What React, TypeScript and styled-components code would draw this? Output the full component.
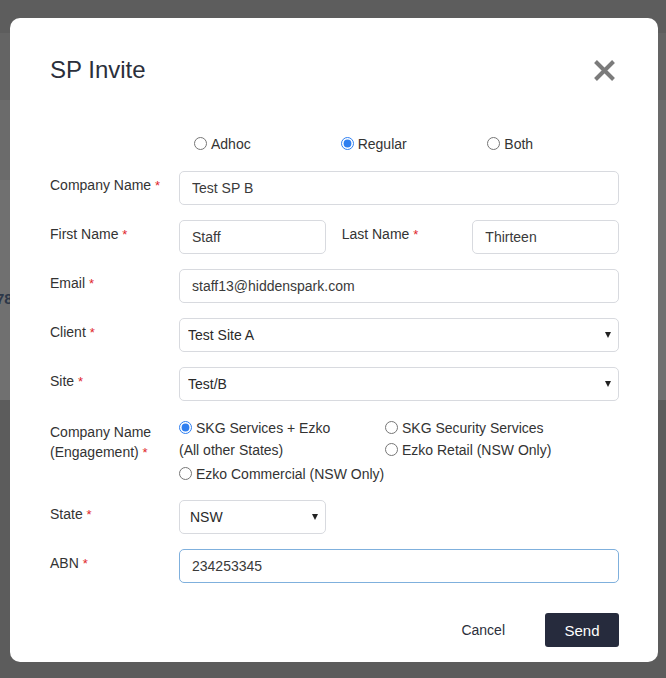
import React from "react";
import styled, { createGlobalStyle } from "styled-components";

const GlobalStyle = createGlobalStyle`
  html, body {
    margin: 0;
    padding: 0;
  }
  body {
    font-family: "Liberation Sans", Arial, sans-serif;
    background: #5e5e5e;
  }
  * {
    box-sizing: border-box;
  }
`;

type Field = {
  label: string;
  value: string;
  select?: boolean;
};

const topFields: Field[] = [
  { label: "Email", value: "staff13@hiddenspark.com" },
  { label: "Client", value: "Test Site A", select: true },
  { label: "Site", value: "Test/B", select: true },
];

function Label({ children }: { children: React.ReactNode }) {
  return (
    <FieldLabel>
      {children} <Req>*</Req>
    </FieldLabel>
  );
}

function Radio({ name, checked, children }: { name: string; checked?: boolean; children: React.ReactNode }) {
  return (
    <RadioLabel>
      <RadioInput type='radio' name={name} defaultChecked={checked} />
      {children}
    </RadioLabel>
  );
}

function App() {
  return (
    <Backdrop>
      <GlobalStyle />
      <GhostText>78</GhostText>
      <Modal>
        <Header>
          <Title>SP Invite</Title>
          <CloseButton aria-label='Close'>
            <svg width='23' height='23' viewBox='0 0 23 23'>
              <path d='M2.5 2.5 L20.5 20.5 M20.5 2.5 L2.5 20.5' stroke='#7b7b7b' strokeWidth='4' />
            </svg>
          </CloseButton>
        </Header>

        <TypeRow>
          <span />
          <ThirdsGrid>
            <TypeCell>
              <Radio name='type'>Adhoc</Radio>
            </TypeCell>
            <TypeCell>
              <Radio name='type' checked>
                Regular
              </Radio>
            </TypeCell>
            <TypeCell>
              <Radio name='type'>Both</Radio>
            </TypeCell>
          </ThirdsGrid>
        </TypeRow>

        <FormRow>
          <Label>Company Name</Label>
          <TextInput defaultValue='Test SP B' />
        </FormRow>

        <FormRow>
          <Label>First Name</Label>
          <ThirdsGrid>
            <TextInput defaultValue='Staff' />
            <InlineLabel>
              <Label>Last Name</Label>
            </InlineLabel>
            <TextInput defaultValue='Thirteen' />
          </ThirdsGrid>
        </FormRow>

        {topFields.map((f) => (
          <FormRow key={f.label}>
            <Label>{f.label}</Label>
            {f.select ? (
              <SelectBox>
                <SelectInput defaultValue={f.value}>
                  <option>{f.value}</option>
                </SelectInput>
              </SelectBox>
            ) : (
              <TextInput defaultValue={f.value} />
            )}
          </FormRow>
        ))}

        <FormRow>
          <FieldLabel $tight>
            Company Name
            <br />
            (Engagement) <Req>*</Req>
          </FieldLabel>
          <EngagementGrid>
            <EngagementItem $col={1} $row='1 / 3'>
              <Radio name='eng' checked>
                SKG Services + Ezko
                <br />
                (All other States)
              </Radio>
            </EngagementItem>
            <EngagementItem $col={2} $row='1'>
              <Radio name='eng'>SKG Security Services</Radio>
            </EngagementItem>
            <EngagementItem $col={2} $row='2'>
              <Radio name='eng'>Ezko Retail (NSW Only)</Radio>
            </EngagementItem>
            <EngagementItem $col={1} $row='3' $push>
              <Radio name='eng'>Ezko Commercial (NSW Only)</Radio>
            </EngagementItem>
          </EngagementGrid>
        </FormRow>

        <FormRow>
          <Label>State</Label>
          <ThirdsGrid>
            <SelectBox>
              <SelectInput defaultValue='NSW' $pad={10}>
                <option>NSW</option>
              </SelectInput>
            </SelectBox>
          </ThirdsGrid>
        </FormRow>

        <FormRow>
          <Label>ABN</Label>
          <TextInput defaultValue='234253345' $focused />
        </FormRow>

        <Footer>
          <CancelButton>Cancel</CancelButton>
          <SendButton>Send</SendButton>
        </Footer>
      </Modal>
    </Backdrop>
  );
}

export default App;

const Backdrop = styled.div`
  position: relative;
  width: 666px;
  height: 678px;
  padding: 18px 8px 16px 10px;
  overflow: hidden;
  background: linear-gradient(
    to bottom,
    #5d5d5d 0,
    #5d5d5d 33px,
    #646464 33px,
    #646464 100px,
    #6b6b6b 100px,
    #6b6b6b 180px,
    #707070 180px,
    #707070 400px,
    #5c5c5c 400px
  );
`;

const GhostText = styled.span`
  position: absolute;
  left: -4px;
  top: 290px;
  font-size: 15px;
  font-weight: 700;
  color: #2c3748;
`;

const Modal = styled.div`
  position: relative;
  width: 648px;
  background: #ffffff;
  border-radius: 10px;
  padding: 38px 39px 15px 40px;
  color: #333333;
`;

const Header = styled.div`
  display: flex;
  justify-content: space-between;
  align-items: center;
  margin-bottom: 49px;
`;

const Title = styled.h2`
  margin: 0;
  font-size: 24px;
  line-height: 28px;
  font-weight: 400;
  color: #2b2f3b;
`;

const CloseButton = styled.button`
  display: flex;
  padding: 0;
  margin-right: 3px;
  border: none;
  background: none;
  cursor: pointer;
`;

const TypeRow = styled.div`
  display: grid;
  grid-template-columns: 129px 1fr;
  margin-bottom: 16px;
`;

const ThirdsGrid = styled.div`
  display: grid;
  grid-template-columns: repeat(3, 1fr);
  align-items: start;
`;

const TypeCell = styled.div`
  padding-left: 15px;
  line-height: 20px;
`;

const FormRow = styled.div`
  display: grid;
  grid-template-columns: 129px 1fr;
  align-items: start;
  margin-bottom: 15px;
`;

const FieldLabel = styled.label<{ $tight?: boolean }>`
  font-size: 14px;
  line-height: 20px;
  padding-top: ${(p) => (p.$tight ? "6px" : "4px")};
  color: #333333;
`;

const InlineLabel = styled.div`
  padding-left: 16px;
  display: flex;
`;

const Req = styled.span`
  color: #e0262b;
  font-size: 13px;
`;

const TextInput = styled.input<{ $focused?: boolean }>`
  width: 100%;
  height: 34px;
  padding: 0 12px;
  font-family: "Liberation Sans", Arial, sans-serif;
  font-size: 14px;
  color: #3a3a3a;
  border: 1px solid ${(p) => (p.$focused ? "#7fb0dd" : "#d8dadf")};
  border-radius: 5px;
  outline: none;
  background: #ffffff;
`;

const SelectBox = styled.div`
  position: relative;
  width: 100%;
  &::after {
    content: "";
    position: absolute;
    right: 8px;
    top: 14px;
    border-left: 3px solid transparent;
    border-right: 3px solid transparent;
    border-top: 6px solid #222222;
    pointer-events: none;
  }
`;

const SelectInput = styled.select<{ $pad?: number }>`
  appearance: none;
  width: 100%;
  height: 34px;
  padding: 0 20px 0 ${(p) => p.$pad ?? 8}px;
  font-family: "Liberation Sans", Arial, sans-serif;
  font-size: 14px;
  color: #2a2a2a;
  border: 1px solid #d8dadf;
  border-radius: 5px;
  background: #ffffff;
  outline: none;
`;

const RadioLabel = styled.label`
  display: inline-block;
  font-size: 14px;
  line-height: 22px;
  color: #333333;
  white-space: nowrap;
`;

const RadioInput = styled.input`
  width: 13px;
  height: 13px;
  margin: 0 4px 0 0;
  vertical-align: -1px;
  accent-color: #2f7ff0;
`;

const EngagementGrid = styled.div`
  display: grid;
  grid-template-columns: 206px 1fr;
  grid-auto-rows: 22px;
  padding-top: 1px;
  margin-bottom: 2px;
`;

const EngagementItem = styled.div<{ $col: number; $row: string; $push?: boolean }>`
  grid-column: ${(p) => p.$col};
  grid-row: ${(p) => p.$row};
  margin-top: ${(p) => (p.$push ? "2px" : "0")};
`;

const Footer = styled.div`
  display: flex;
  justify-content: flex-end;
  align-items: center;
  gap: 24px;
  margin-top: 30px;
`;

const CancelButton = styled.button`
  height: 34px;
  padding: 0 16px;
  border: none;
  background: none;
  font-family: "Liberation Sans", Arial, sans-serif;
  font-size: 14px;
  color: #2b2f3b;
  cursor: pointer;
`;

const SendButton = styled.button`
  width: 74px;
  height: 34px;
  border: none;
  border-radius: 3px;
  background: #262b3d;
  color: #ffffff;
  font-family: "Liberation Sans", Arial, sans-serif;
  font-size: 15px;
  cursor: pointer;
`;
